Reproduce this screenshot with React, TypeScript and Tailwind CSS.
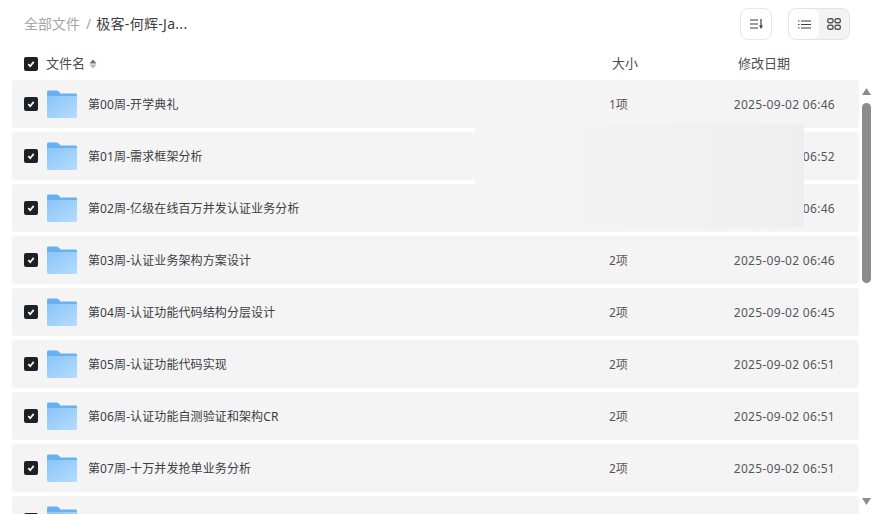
import React from 'react';

const FILES = [
  { name: '第00周-开学典礼', size: '1项', date: '2025-09-02 06:46' },
  { name: '第01周-需求框架分析', size: '2项', date: '2025-09-02 06:52' },
  { name: '第02周-亿级在线百万并发认证业务分析', size: '2项', date: '2025-09-02 06:46' },
  { name: '第03周-认证业务架构方案设计', size: '2项', date: '2025-09-02 06:46' },
  { name: '第04周-认证功能代码结构分层设计', size: '2项', date: '2025-09-02 06:45' },
  { name: '第05周-认证功能代码实现', size: '2项', date: '2025-09-02 06:51' },
  { name: '第06周-认证功能自测验证和架构CR', size: '2项', date: '2025-09-02 06:51' },
  { name: '第07周-十万并发抢单业务分析', size: '2项', date: '2025-09-02 06:51' },
  { name: '', size: '', date: '' },
];

const Checkbox = () => (
  <div className="w-[14px] h-[14px] shrink-0 rounded-[2px] bg-[#1f2026] flex items-center justify-center">
    <svg width="10" height="10" viewBox="0 0 10 10" fill="none">
      <path d="M2.3 5.2 4.2 7.2 7.7 2.9" stroke="#fff" strokeWidth="1.7" />
    </svg>
  </div>
);

const FolderIcon = () => (
  <svg width="30" height="28" viewBox="0 0 30 28" className="shrink-0">
    <defs>
      <linearGradient id="folderBody" x1="0" y1="0" x2="1" y2="1">
        <stop offset="0" stopColor="#8ac5f8" />
        <stop offset="1" stopColor="#b4dcfe" />
      </linearGradient>
    </defs>
    <path d="M0 2C0 1.200.7.500 1.500.500h8.200c.6 0 1 .2 1.400.6L13.600 3.500H28.500c.8 0 1.500.7 1.500 1.500V8H0Z" fill="#66b1f2" />
    <path d="M0 6h28.500c.8 0 1.500.7 1.500 1.500V26.500c0 .8-.7 1.500-1.500 1.500H1.500C.7 28 0 27.300 0 26.500Z" fill="url(#folderBody)" />
    <rect x="22" y="10" width="3" height="1" fill="#9ccff9" />
  </svg>
);

const App: React.FC = () => {
  return (
    <div className="relative w-[874px] h-[514px] overflow-hidden bg-white text-[#3c3d45] font-['Noto_Sans','Noto_Sans_CJK_SC',sans-serif]">
      <div className="h-12 pl-6 pr-6 flex items-center">
        <span className="pb-[2px] text-[14px] text-[#a5a5a8]">全部文件</span>
        <span className="pb-[2px] text-[14px] text-[#a5a5a8] ml-[6px] mr-[5px]">/</span>
        <span className="pb-[2px] text-[14px] tracking-[0.3px] text-[#3c3d45]">极客-何辉-Ja...</span>
        <div className="ml-auto w-8 h-8 rounded-lg border border-[#e8e8e8] flex items-center justify-center">
          <svg width="13" height="10" viewBox="0 0 13 10" fill="none" stroke="#3c3d45" strokeWidth="1.2">
            <path d="M0 1h8M0 5h8M0 9h8M11 0v7" />
            <path d="M9 6.500 11 10 13 6.500Z" fill="#3c3d45" stroke="none" />
          </svg>
        </div>
        <div className="ml-4 w-[62px] h-8 rounded-lg border border-[#e4e4e4] bg-[#f3f3f3] flex">
          <div className="w-[30px] rounded-lg bg-white flex items-center justify-center">
            <svg width="13" height="9" viewBox="0 0 13 9" fill="none" stroke="#3c3d45" strokeWidth="1.100">
              <path d="M3 1h10M3 4.500h10M3 8h10M0 1h1.500M0 4.500h1.500M0 8h1.500" />
            </svg>
          </div>
          <div className="flex-1 flex items-center justify-center">
            <svg width="14" height="12" viewBox="0 0 14 12" fill="none" stroke="#55565c" strokeWidth="1.400">
              <rect x="0.700" y="0.700" width="5.300" height="4.100" rx="1.500" />
              <rect x="8" y="0.700" width="5.300" height="4.100" rx="1.500" />
              <rect x="0.700" y="7.200" width="5.300" height="4.100" rx="1.500" />
              <rect x="8" y="7.200" width="5.300" height="4.100" rx="1.500" />
            </svg>
          </div>
        </div>
      </div>

      <div className="h-8 pl-6 flex items-center text-[13px] text-[#4c4d55]">
        <Checkbox />
        <span className="ml-2">文件名</span>
        <svg width="8" height="12" viewBox="0 0 8 12" className="ml-[4px]">
          <path d="M4 1.500 7.500 5.500H.5Z" fill="#6f6f6f" />
          <path d="M4 10.500 .5 6.500h7Z" fill="#b5b5b5" />
        </svg>
        <span className="ml-[515px]">大小</span>
        <span className="ml-[100px]">修改日期</span>
      </div>

      <div className="flex">
        <div className="flex-1 pl-3 flex flex-col gap-1">
          {FILES.map((file, i) => (
            <div key={i} className="h-12 shrink-0 pl-3 pr-6 rounded bg-[#f4f4f4] flex items-center text-[12px]">
              <Checkbox />
              <div className="ml-[9px]">
                <FolderIcon />
              </div>
              <span className="ml-[11px] w-[521px] pt-[2px] tracking-[0.1px]">{file.name}</span>
              <span className="pt-[2px] text-[#55565c]">{file.size}</span>
              <span className="ml-auto pt-[2px] tracking-[0.3px] text-[#55565c]">{file.date}</span>
            </div>
          ))}
        </div>
        <div className="w-[15px] shrink-0 flex flex-col items-center">
          <svg width="9" height="7" viewBox="0 0 9 7" className="mt-2">
            <path d="M4.500 0 9 7H0Z" fill="#8c8c8c" />
          </svg>
          <div className="mt-[8px] w-[9px] h-[180px] rounded-[5px] bg-[#8c8c8c]" />
          <svg width="9" height="7" viewBox="0 0 9 7" className="mt-[215px]">
            <path d="M4.500 7 0 0h9Z" fill="#8c8c8c" />
          </svg>
        </div>
      </div>

      <div className="absolute left-[475px] top-[124px] w-[329px] h-[103px] bg-gradient-to-r from-[#f5f4f4] via-[#f2f2f2] to-[#eeeeee]" />
    </div>
  );
};

export default App;
